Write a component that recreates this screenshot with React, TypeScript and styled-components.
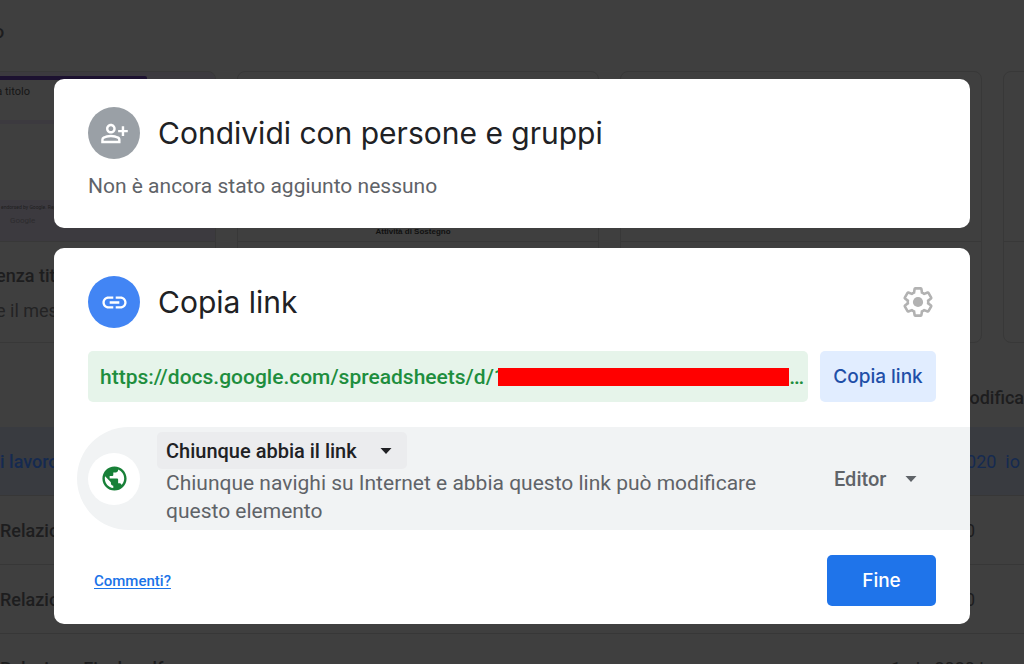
import React from "react";
import styled, { createGlobalStyle } from "styled-components";
import { MdLink, MdOutlinePersonAddAlt, MdPublic } from "react-icons/md";

const GlobalStyle = createGlobalStyle`
  *, *::before, *::after { box-sizing: border-box; }
  html, body, #root { height: 100%; }
  body {
    margin: 0;
    overflow: hidden;
    background: #3f3f3f;
    font-family: Roboto, "Liberation Sans", sans-serif;
    font-size: 21px;
  }
  h1, h2, p { margin: 0; font-weight: 400; }
  button, select { font-family: inherit; border: 0; margin: 0; cursor: pointer; }
`;

const Screen = styled.div`
  position: relative;
  height: 100%;
  overflow: hidden;
`;

/* Dimmed document list behind the dialog */

const Backdrop = styled.div`
  color: #1d1d1e;
  font-size: 18px;
  font-weight: 500;
`;

const SectionHeading = styled.p`
  height: 71px;
  padding-top: 20px;
  margin-left: -6px;
  line-height: 24px;
  font-weight: 500;
`;

const Cards = styled.div`
  display: flex;
  gap: 21px;
  margin-left: -146px;
`;

const FileCard = styled.div`
  flex: 0 0 362px;
  height: 272px;
  border: 1px solid #383838;
  border-radius: 8px;
  overflow: hidden;
`;

const Preview = styled.div<{ $tinted?: boolean }>`
  display: flex;
  flex-direction: column;
  height: 170px;
  border-bottom: 1px solid #383838;
  background: ${(p) => (p.$tinted ? "#3c3a3f" : "transparent")};
`;

const FormSheet = styled.div`
  width: 292px;
  margin-top: 4px;
  height: 44px;
  padding: 6px 117px 0 0;
  border-top: 4px solid #1c1130;
  border-radius: 2px 2px 0 0;
  background: #3f3f3f;
  color: #161616;
  font-size: 11px;
  font-weight: 400;
  line-height: 12px;
  text-align: right;
`;

const FormBody = styled.div`
  height: 76px;
  margin-top: 4px;
  background: #3f3f3f;
`;

const FormFooter = styled.div`
  padding-left: 146px;
  color: #1f1f20;
  font-size: 5px;
  line-height: 14px;
  font-weight: 400;
`;

const FormBrand = styled.p`
  padding-left: 9px;
  color: #2c2b2e;
  font-size: 8px;
  line-height: 14px;
`;

const DocTitle = styled.p`
  margin: auto 0 4px;
  padding-right: 10px;
  font-family: "Liberation Sans", sans-serif;
  font-size: 8px;
  font-weight: 700;
  line-height: 11px;
  color: #111;
  text-align: center;
`;

const CardCaption = styled.div`
  padding: 16px 0 0 141px;
  line-height: 35px;
  color: #1d1d1e;
`;

const CardNote = styled.p`
  font-weight: 400;
  color: #232324;
`;

const ListHead = styled.div`
  display: flex;
  justify-content: flex-end;
  height: 84px;
  padding-top: 43px;
  line-height: 24px;
`;

const ListRow = styled.div<{ $selected?: boolean }>`
  display: flex;
  justify-content: space-between;
  align-items: center;
  height: 69px;
  border-bottom: 1px solid #373737;
  background: ${(p) => (p.$selected ? "#393b40" : "transparent")};
  color: ${(p) => (p.$selected ? "#152a50" : "#1d1d1e")};
`;

const DateCell = styled.span<{ $inset: number }>`
  padding-right: ${(p) => p.$inset}px;
  font-weight: 400;
`;

/* Dialog */

const Dialog = styled.main`
  position: absolute;
  inset: 0;
  display: flex;
  flex-direction: column;
  gap: 20px;
  padding: 79px 54px 40px;
`;

const Panel = styled.section`
  padding: 28px 34px 18px;
  border-radius: 10px;
  background: #fff;
`;

const PanelHeader = styled.header`
  display: flex;
  align-items: center;
  gap: 18px;
`;

const Badge = styled.span<{ $color: string; $ink: string }>`
  flex: none;
  display: flex;
  align-items: center;
  justify-content: center;
  width: 52px;
  height: 52px;
  border-radius: 50%;
  background: ${(p) => p.$color};
  color: ${(p) => p.$ink};
`;

const Title = styled.h2`
  flex: 1;
  font-family: Inter, "Liberation Sans", sans-serif;
  font-size: 30px;
  line-height: 40px;
  color: #202124;
`;

const Note = styled.p`
  color: #5f6368;
  line-height: 28px;
`;

const EmptyNote = styled(Note)`
  margin: 13px 0 10px;
`;

const IconButton = styled.button`
  display: flex;
  padding: 0;
  background: none;
  color: #b2b2b2;
`;

const LinkRow = styled.div`
  display: flex;
  gap: 12px;
  margin-top: 23px;
`;

const LinkBox = styled.div`
  flex: 1;
  min-width: 0;
  display: flex;
  align-items: center;
  height: 51px;
  padding: 0 4px 0 12px;
  border-radius: 5px;
  background: #e6f4ea;
`;

const ShareUrl = styled.a`
  color: #1e8e3e;
  font-weight: 500;
  text-decoration: none;
  white-space: nowrap;
`;

const Redaction = styled.span`
  flex: 1;
  height: 18px;
  margin-left: -8px;
  background: #f00;
  z-index: 1;
`;

const CopyButton = styled.button`
  width: 116px;
  height: 51px;
  padding: 0;
  border-radius: 5px;
  background: #e1edff;
  color: #1f4fa8;
  && { font-family: Inter, "Liberation Sans", sans-serif; }
  font-size: 19px;
  font-weight: 500;
`;

const AccessRow = styled.div`
  display: flex;
  align-items: center;
  margin: 25px -34px 0 -11px;
  min-height: 103px;
  padding: 5px 43px 5px 11px;
  border-radius: 52px 0 0 52px;
  background: #f1f3f4;
`;

const AccessText = styled.div`
  flex: 1;
  min-width: 0;
  padding-left: 17px;
`;

const AccessNote = styled(Note)`
  max-width: 620px;
  padding-left: 9px;
`;

const SelectShell = styled.div<{ $filled?: boolean }>`
  display: grid;
  width: fit-content;
  align-items: center;
  justify-items: end;
  border-radius: 5px;
  background: ${(p) => (p.$filled ? "#ebecee" : "transparent")};
  color: ${(p) => (p.$filled ? "#202124" : "#5f6368")};

  > * { grid-area: 1 / 1; }
  > svg { margin-right: ${(p) => (p.$filled ? 15 : 10)}px; pointer-events: none; }
`;

const Select = styled.select`
  appearance: none;
  height: 37px;
  padding: 0 50px 0 9px;
  background: transparent;
  color: inherit;
  font-size: 20px;
  font-weight: 500;
  ${SelectShell}:not(:first-child) > & { padding-right: 40px; }
`;

const Footer = styled.footer`
  display: flex;
  align-items: center;
  justify-content: space-between;
  margin-top: 25px;
  padding-left: 6px;
`;

const FeedbackLink = styled.a`
  color: #1a73e8;
  font-size: 15px;
  font-weight: 500;
  text-underline-offset: 2px;
`;

const DoneButton = styled.button`
  width: 109px;
  height: 51px;
  border-radius: 5px;
  background: #1f74ea;
  color: #fff;
  && { font-family: Inter, "Liberation Sans", sans-serif; }
  font-size: 19px;
  font-weight: 500;
`;

const Caret = () => (
  <svg width="12" height="6" viewBox="0 0 12 6" aria-hidden="true">
    <path d="M0.5 0h11L6 6z" fill="currentColor" />
  </svg>
);

const Gear = () => (
  <svg width="36" height="36" viewBox="0 0 24 24" aria-hidden="true">
    <path
      transform="translate(12 12) scale(.91) translate(-12 -12)"
      fill="none"
      stroke="currentColor"
      strokeWidth="1.9"
      d="M19.43 12.98c.04-.32.07-.64.07-.98 0-.34-.03-.66-.07-.98l2.11-1.65c.19-.15.24-.42.12-.64l-2-3.46a.5.5 0 0 0-.61-.22l-2.49 1c-.52-.4-1.08-.73-1.69-.98l-.38-2.65A.488.488 0 0 0 14 2h-4c-.25 0-.46.18-.49.42l-.38 2.65c-.61.25-1.17.59-1.69.98l-2.49-1a.566.566 0 0 0-.18-.03c-.17 0-.34.09-.43.25l-2 3.46c-.13.22-.07.49.12.64l2.11 1.65c-.04.32-.07.65-.07.98 0 .33.03.66.07.98l-2.11 1.65c-.19.15-.24.42-.12.64l2 3.46a.5.5 0 0 0 .61.22l2.49-1c.52.4 1.08.73 1.69.98l.38 2.65c.03.24.24.42.49.42h4c.25 0 .46-.18.49-.42l.38-2.65c.61-.25 1.17-.59 1.69-.98l2.49 1c.06.02.12.03.18.03.17 0 .34-.09.43-.25l2-3.46c.12-.22.07-.49-.12-.64z"
    />
    <circle cx="12" cy="12" r="3.4" fill="currentColor" />
  </svg>
);

export default function App() {
  return (
    <Screen>
      <GlobalStyle />
      <Backdrop aria-hidden="true">
        <SectionHeading>o</SectionHeading>
        <Cards>
          <FileCard>
            <Preview $tinted>
              <FormSheet>a titolo</FormSheet>
              <FormBody />
              <FormFooter>
                endorsed by Google. Report
                <FormBrand>Google</FormBrand>
              </FormFooter>
            </Preview>
            <CardCaption>
              enza tit
              <CardNote>e il mese</CardNote>
            </CardCaption>
          </FileCard>
          <FileCard>
            <Preview>
              <DocTitle>Attività di Sostegno</DocTitle>
            </Preview>
          </FileCard>
          <FileCard>
            <Preview />
          </FileCard>
          <FileCard>
            <Preview />
          </FileCard>
        </Cards>
        <ListHead>odifica</ListHead>
        <ListRow $selected>
          <span>i lavoro</span>
          <DateCell $inset={4}>020&nbsp; io</DateCell>
        </ListRow>
        <ListRow>
          <span>Relazio</span>
          <DateCell $inset={49}>0</DateCell>
        </ListRow>
        <ListRow>
          <span>Relazio</span>
          <DateCell $inset={49}>0</DateCell>
        </ListRow>
        <ListRow>
          <span>Relazione Finale.pdf</span>
          <DateCell $inset={30}>1 giu 2020 io</DateCell>
        </ListRow>
      </Backdrop>

      <Dialog>
        <Panel>
          <PanelHeader>
            <Badge $color="#9aa0a6" $ink="#fff">
              <MdOutlinePersonAddAlt size={29} />
            </Badge>
            <Title>Condividi con persone e gruppi</Title>
          </PanelHeader>
          <EmptyNote>Non è ancora stato aggiunto nessuno</EmptyNote>
        </Panel>

        <Panel>
          <PanelHeader>
            <Badge $color="#4285f4" $ink="#fff">
              <MdLink size={29} />
            </Badge>
            <Title>Copia link</Title>
            <IconButton type="button" aria-label="Impostazioni">
              <Gear />
            </IconButton>
          </PanelHeader>

          <LinkRow>
            <LinkBox>
              <ShareUrl href="https://docs.google.com/spreadsheets/">
                https://docs.google.com/spreadsheets/d/1
              </ShareUrl>
              <Redaction />
              <ShareUrl as="span">…</ShareUrl>
            </LinkBox>
            <CopyButton type="button">Copia link</CopyButton>
          </LinkRow>

          <AccessRow>
            <Badge $color="#fff" $ink="#188038">
              <MdPublic size={29} />
            </Badge>
            <AccessText>
              <SelectShell $filled>
                <Select aria-label="Accesso generale">
                  <option>Chiunque abbia il link</option>
                </Select>
                <Caret />
              </SelectShell>
              <AccessNote>
                Chiunque navighi su Internet e abbia questo link può modificare questo elemento
              </AccessNote>
            </AccessText>
            <SelectShell>
              <Select aria-label="Ruolo">
                <option>Editor</option>
              </Select>
              <Caret />
            </SelectShell>
          </AccessRow>

          <Footer>
            <FeedbackLink href="#commenti">Commenti?</FeedbackLink>
            <DoneButton type="button">Fine</DoneButton>
          </Footer>
        </Panel>
      </Dialog>
    </Screen>
  );
}
